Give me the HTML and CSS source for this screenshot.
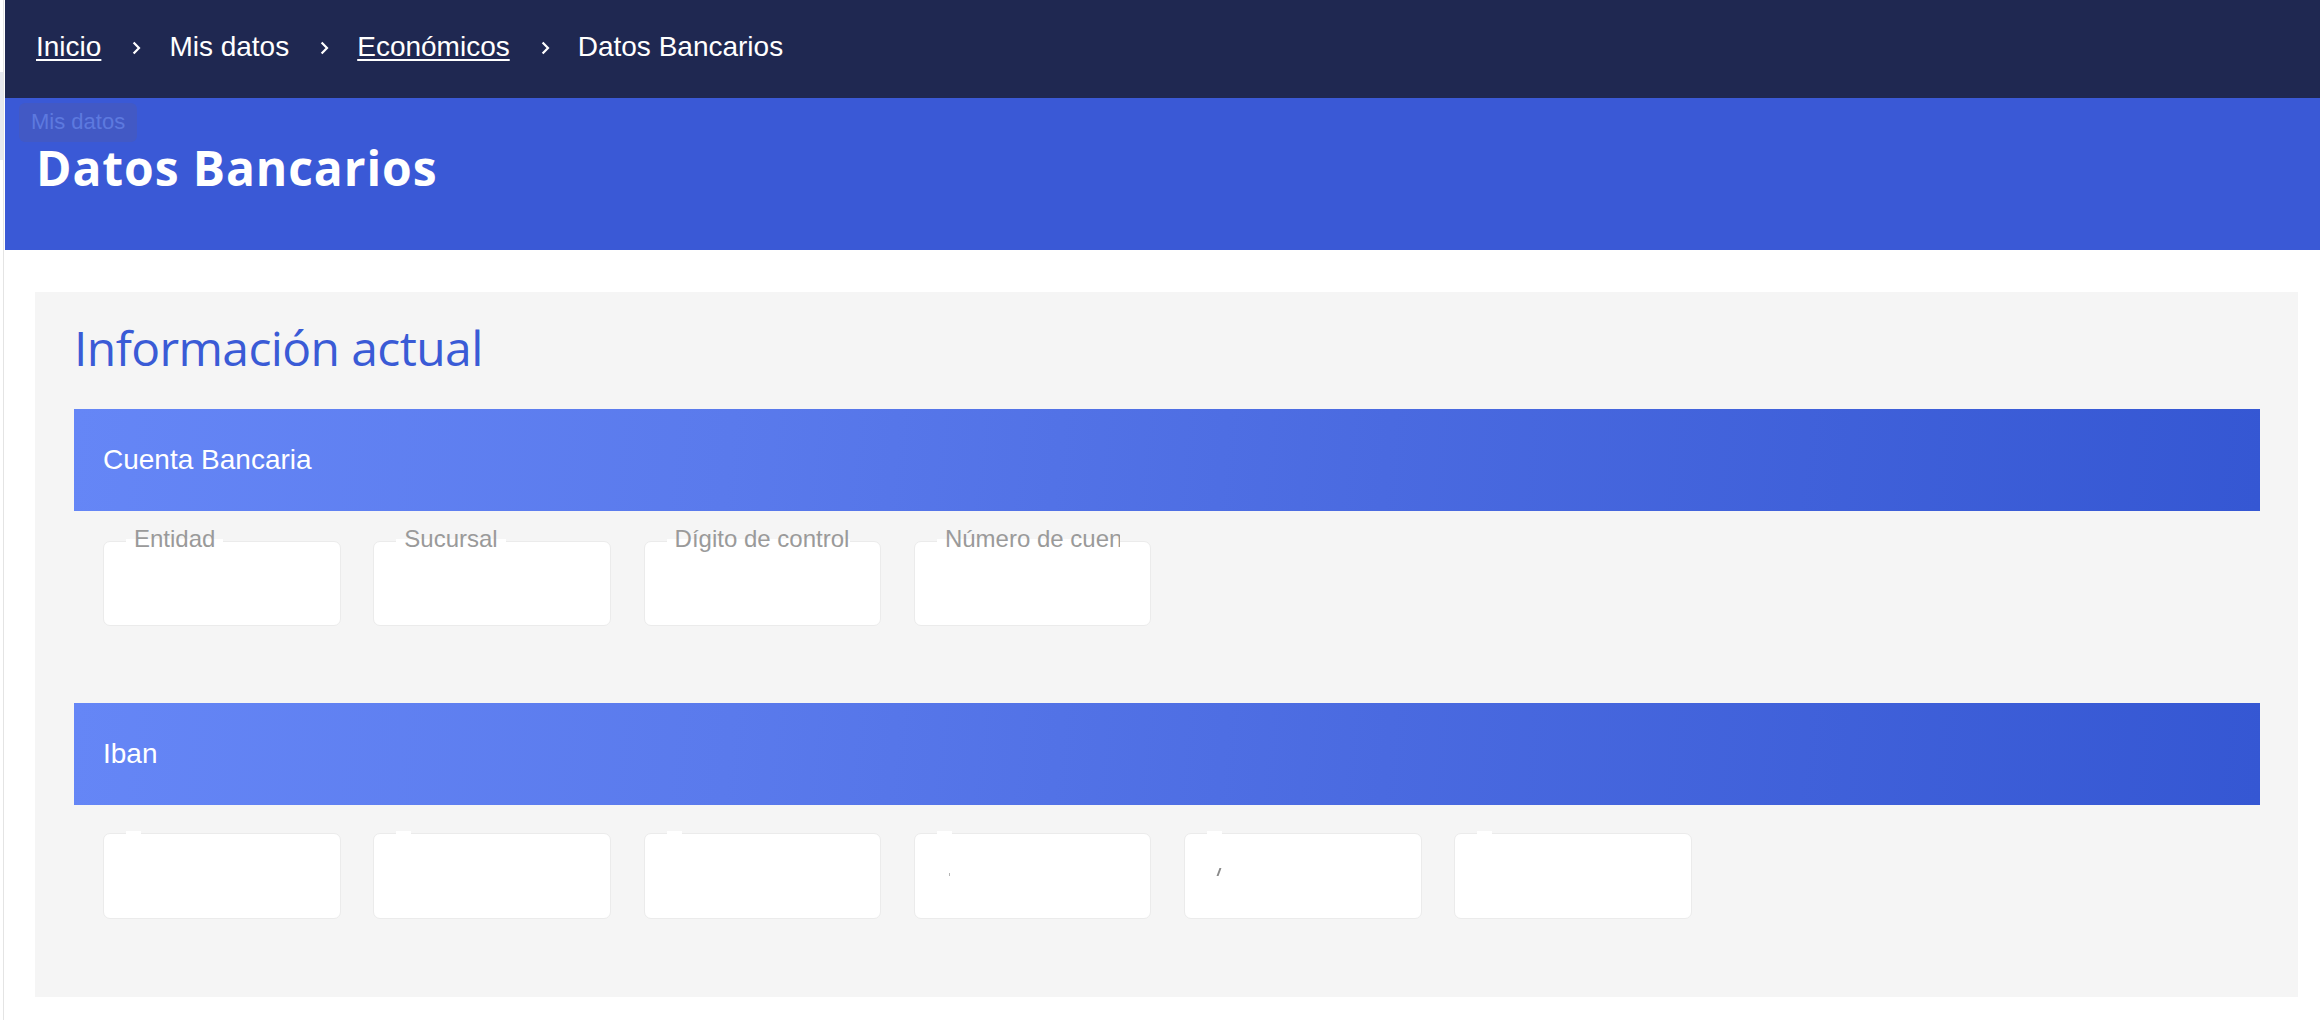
FILE: index.html
```html
<!DOCTYPE html>
<html lang="es">
<head>
<meta charset="utf-8">
<title>Datos Bancarios</title>
<link rel="stylesheet" href="styles.css">
</head>
<body>
<div class="page">
  <div class="edge"><div class="edge-shade"></div></div>
  <div class="main">
    <nav class="crumbs">
      <a class="crumb link" href="#">Inicio</a>
      <svg class="chev" viewBox="0 0 9 14" width="9" height="14"><polyline points="1.6,1.4 7,7 1.6,12.6" fill="none" stroke="#fff" stroke-width="2.2"/></svg>
      <span class="crumb">Mis datos</span>
      <svg class="chev" viewBox="0 0 9 14" width="9" height="14"><polyline points="1.6,1.4 7,7 1.6,12.6" fill="none" stroke="#fff" stroke-width="2.2"/></svg>
      <a class="crumb link" href="#">Económicos</a>
      <svg class="chev" viewBox="0 0 9 14" width="9" height="14"><polyline points="1.6,1.4 7,7 1.6,12.6" fill="none" stroke="#fff" stroke-width="2.2"/></svg>
      <span class="crumb">Datos Bancarios</span>
    </nav>
    <header class="hero">
      <span class="pill">Mis datos</span>
      <h1 class="title">Datos Bancarios</h1>
    </header>
    <div class="content">
      <section class="card">
        <h2 class="card-title">Información actual</h2>
        <div class="bar">Cuenta Bancaria</div>
        <div class="fields fields-first">
          <div class="field"><div class="box"></div><span class="label">Entidad</span></div>
          <div class="field"><div class="box"></div><span class="label">Sucursal</span></div>
          <div class="field"><div class="box"></div><span class="label">Dígito de control</span></div>
          <div class="field"><div class="box"></div><span class="label">Número de cuenta</span></div>
        </div>
        <div class="bar bar-second">Iban</div>
        <div class="fields fields-second">
          <div class="field"><div class="box"></div><span class="label empty"></span></div>
          <div class="field"><div class="box"></div><span class="label empty"></span></div>
          <div class="field"><div class="box"></div><span class="label empty"></span></div>
          <div class="field"><div class="box"><span class="mark mark-tick"></span></div><span class="label empty"></span></div>
          <div class="field"><div class="box"><span class="mark mark-slash"></span></div><span class="label empty"></span></div>
          <div class="field"><div class="box"></div><span class="label empty"></span></div>
        </div>
      </section>
    </div>
  </div>
</div>
</body>
</html>
```

FILE: styles.css
```css
html, body {
  margin: 0;
  padding: 0;
  background: #ffffff;
}

body {
  width: 2320px;
  height: 1020px;
  overflow: hidden;
  font-family: "Liberation Sans", Arial, sans-serif;
}

.page {
  display: flex;
  height: 1020px;
}

.edge {
  width: 3px;
  flex: 0 0 3px;
  border-right: 1px solid #e4e4e4;
  margin-right: 1px;
  background: #ffffff;
}

.edge-shade {
  margin-top: 72px;
  height: 88px;
  background: #e6e8ef;
}

.main {
  flex: 1;
  display: flex;
  flex-direction: column;
  min-width: 0;
}

/* breadcrumb bar */
.crumbs {
  height: 98px;
  box-sizing: border-box;
  background: #1f2851;
  display: flex;
  align-items: center;
  padding: 0 0 3px 31px;
  font-size: 28px;
  line-height: 1.15;
  color: #ffffff;
}

.crumb {
  color: #ffffff;
  white-space: nowrap;
}

.crumb.link {
  text-decoration: underline;
  text-decoration-thickness: 2px;
  text-underline-offset: 3px;
}

.chev {
  display: block;
  flex: 0 0 9px;
  margin: 0 28px 0 31px;
}

/* blue hero */
.hero {
  height: 152px;
  box-sizing: border-box;
  background: #3a59d6;
  padding-top: 5px;
  display: flex;
  flex-direction: column;
  align-items: flex-start;
}

.pill {
  margin-left: 14px;
  height: 39px;
  box-sizing: border-box;
  padding: 0 12px 2px;
  line-height: 37px;
  font-size: 22px;
  color: #5d79df;
  background: #4259c5;
  border-radius: 6px;
}

.title {
  margin: 2px 0 0 31px;
  font-family: "Open Sans", "Noto Sans", sans-serif;
  font-weight: 700;
  font-size: 48px;
  line-height: 48px;
  color: #ffffff;
  letter-spacing: 0.9px;
}

/* content */
.content {
  flex: 1;
  padding: 42px 22px 0 30px;
}

.card {
  background: #f5f5f5;
  padding: 27px 38px 78px 39px;
}

.card-title {
  margin: 0 0 32px 0;
  font-family: "Open Sans", "Noto Sans", sans-serif;
  font-weight: 400;
  font-size: 48px;
  line-height: 58px;
  color: #3a5bd6;
  letter-spacing: -0.6px;
}

.bar {
  height: 102px;
  box-sizing: border-box;
  display: flex;
  align-items: center;
  padding-left: 29px;
  font-size: 28px;
  color: #ffffff;
  background: linear-gradient(96deg, #6586f6 0%, #5a7aec 30%, #4a6ae0 60%, #3557d3 100%);
}

.bar-second {
  margin-top: 77px;
}

.fields {
  display: flex;
  gap: 32.8px;
  padding-left: 29px;
}

.fields-first {
  margin-top: 30px;
  height: 85px;
}

.fields-second {
  margin-top: 28px;
  height: 86px;
}

.field {
  position: relative;
  width: 237.5px;
  height: 100%;
}

.box {
  height: 100%;
  box-sizing: border-box;
  border: 1px solid #ebebeb;
  border-radius: 7px;
  background: #ffffff;
  padding-left: 33px;
}

.label {
  position: absolute;
  left: 23px;
  top: -16px;
  box-sizing: border-box;
  max-width: 183px;
  padding: 0 8px;
  font-size: 24px;
  line-height: 28px;
  height: 28px;
  color: #9a9a9a;
  white-space: nowrap;
  overflow: hidden;
  background: linear-gradient(to bottom, rgba(255,255,255,0) 14px, #ffffff 14px);
}

.label.empty {
  width: 15px;
  padding: 0;
}

.mark {
  display: block;
  background: #9a9a9a;
}

.mark-tick {
  width: 1px;
  height: 3px;
  margin-top: 39px;
  margin-left: 1px;
  background: #b5b5b5;
}

.mark-slash {
  width: 2px;
  height: 8px;
  margin-top: 34px;
  transform: skewX(-20deg);
  background: #8a8a8a;
}
```
